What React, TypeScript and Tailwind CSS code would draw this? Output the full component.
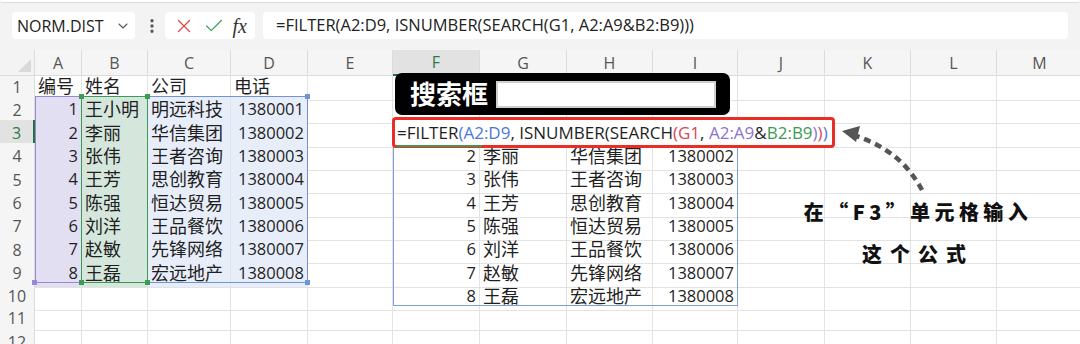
import { ChevronDown, EllipsisVertical, X, Check } from "lucide-react";

const COLS = "grid-cols-[35px_47px_66px_83px_77px_85px_87px_87px_86px_85px_87px_86px_86px_86px]";
const LETTERS = ["", "A", "B", "C", "D", "E", "F", "G", "H", "I", "J", "K", "L", "M"];

const people = [
  { id: 1, name: "王小明", company: "明远科技", phone: "1380001" },
  { id: 2, name: "李丽", company: "华信集团", phone: "1380002" },
  { id: 3, name: "张伟", company: "王者咨询", phone: "1380003" },
  { id: 4, name: "王芳", company: "思创教育", phone: "1380004" },
  { id: 5, name: "陈强", company: "恒达贸易", phone: "1380005" },
  { id: 6, name: "刘洋", company: "王品餐饮", phone: "1380006" },
  { id: 7, name: "赵敏", company: "先锋网络", phone: "1380007" },
  { id: 8, name: "王磊", company: "宏远地产", phone: "1380008" },
];

const cjk = /[\u4e00-\u9fff]/;

type CellProps = { text?: string | number; right?: boolean; bg?: string };

function Cell({ text, right, bg }: CellProps) {
  const s = text === undefined ? "" : String(text);
  return (
    <div
      className={`flex items-center overflow-visible whitespace-nowrap border-r border-b border-[#e3e3e3] px-[3px] text-[#1f1f1f] ${
        right ? "justify-end" : "justify-start"
      } ${cjk.test(s) ? "text-[18px]" : "text-[16.5px]"} ${bg ?? ""}`}
    >
      {s}
    </div>
  );
}

// cells for one sheet row, keyed by column letter
function rowCells(r: number): Record<string, CellProps> {
  const out: Record<string, CellProps> = {};
  if (r === 1) {
    out.A = { text: "编号" };
    out.B = { text: "姓名" };
    out.C = { text: "公司" };
    out.D = { text: "电话" };
  } else if (r >= 2 && r <= 9) {
    const p = people[r - 2];
    out.A = { text: p.id, right: true, bg: "bg-[#e3dff3]" };
    out.B = { text: p.name, bg: "bg-[#d5e7dd]" };
    out.C = { text: p.company, bg: "bg-[#e8eef9]" };
    out.D = { text: p.phone, right: true, bg: "bg-[#e8eef9]" };
  }
  // row 3 of the spill sits under the formula overlay, so it's left out
  if (r >= 4 && r <= 10) {
    const p = people[r - 3];
    out.F = { text: p.id, right: true };
    out.G = { text: p.name };
    out.H = { text: p.company };
    out.I = { text: p.phone, right: true };
  }
  return out;
}

function Toolbar() {
  return (
    <div className="h-[50px] bg-[#f3f3f3]">
      <div className="h-[3px] rounded-b-md border-b border-[#dedede] bg-white" />
      <div className="flex items-center pt-[9px] pl-[12px] pr-[12px]">
        <div className="flex h-[27px] w-[123px] items-center justify-between rounded-[4px] bg-white pl-[5px] pr-[4px]">
          <span className="text-[16px] text-[#222]">NORM.DIST</span>
          <ChevronDown size={16} strokeWidth={1.6} className="text-[#555]" />
        </div>
        <EllipsisVertical size={18} strokeWidth={2.4} className="ml-[8px] text-[#555]" />
        <div className="ml-[4px] flex h-[27px] w-[90px] items-center justify-between rounded-[4px] bg-white px-[8px]">
          <X size={22} strokeWidth={1.4} className="text-[#e0484a]" />
          <Check size={22} strokeWidth={1.4} className="text-[#3aa45c]" />
          <span className="font-['Liberation_Serif',serif] text-[20px] italic text-[#333]">fx</span>
        </div>
        <div className="ml-[8px] flex h-[27px] flex-1 items-center rounded-[4px] bg-white pl-[13px] text-[16.5px] text-[#222]">
          =FILTER(A2:D9, ISNUMBER(SEARCH(G1, A2:A9&amp;B2:B9)))
        </div>
      </div>
    </div>
  );
}

function HeaderRow() {
  return (
    <div className={`grid h-[23px] ${COLS}`}>
      {LETTERS.map((l, i) =>
        i === 0 ? (
          <div key={i} className="relative border-r border-b border-[#dcdcdc] bg-[#f3f3f3]">
            <svg className="absolute right-[3px] bottom-[3px]" width="13" height="13" viewBox="0 0 13 13">
              <path d="M13 0 L13 13 L0 13 Z" fill="#d9d9d9" />
            </svg>
          </div>
        ) : l === "F" ? (
          <div key={i} className="flex items-center justify-center border-r border-b-2 border-r-[#dcdcdc] border-b-[#217346] bg-[#e2e2e2] text-[16px] text-[#2b7a4b]">
            {l}
          </div>
        ) : (
          <div key={i} className="flex items-center justify-center border-r border-b border-[#dcdcdc] bg-[#f5f5f5] text-[16px] text-[#555]">
            {l}
          </div>
        )
      )}
    </div>
  );
}

function Rows() {
  return (
    <>
      {Array.from({ length: 12 }, (_, k) => k + 1).map((r) => {
        const cells = rowCells(r);
        return (
          <div key={r} className={`grid h-[23.33px] ${COLS}`}>
            <div
              className={`flex items-center justify-center border-b text-[16px] ${
                r === 3
                  ? "border-r-2 border-r-[#217346] border-b-[#dcdcdc] bg-[#e2e2e2] text-[#2b7a4b]"
                  : "border-r border-[#dcdcdc] bg-[#f5f5f5] text-[#555]"
              }`}
            >
              {r}
            </div>
            {LETTERS.slice(1).map((l) => (
              <Cell key={l} {...(cells[l] ?? {})} />
            ))}
          </div>
        );
      })}
    </>
  );
}

function Handle({ className }: { className: string }) {
  return <div className={`absolute h-[5px] w-[5px] ${className}`} />;
}

function Arrow() {
  return (
    <svg className="pointer-events-none absolute left-[832px] top-[120px]" width="110" height="80" viewBox="0 0 110 80">
      <path
        d="M90 70 C 78 48, 60 28, 24 16"
        fill="none"
        stroke="#555"
        strokeWidth="4.5"
        strokeDasharray="7 5"
      />
      <path d="M10 11 L 28 6 L 24 22 Z" fill="#555" />
    </svg>
  );
}

export default function App() {
  return (
    <div className="relative h-[344px] w-[1080px] overflow-hidden bg-white font-['Open_Sans','Noto_Sans_CJK_SC',sans-serif]">
      <Toolbar />
      <div className="relative">
        <HeaderRow />
        <Rows />

        {/* formula range highlights */}
        <div className="pointer-events-none absolute left-[35px] top-[46.3px] h-[186.7px] w-[273px] border-[1.5px] border-[#6f95d8]" />
        <div className="pointer-events-none absolute left-[35px] top-[46.3px] h-[186.7px] w-[47px] border-[1.5px] border-[#9b87d2]" />
        <div className="pointer-events-none absolute left-[81px] top-[46.3px] h-[186.7px] w-[67px] border-[1.5px] border-[#3c9a55]">
          <Handle className="-left-[3px] -top-[3px] bg-[#3c9a55]" />
          <Handle className="-right-[3px] -top-[3px] bg-[#3c9a55]" />
          <Handle className="-left-[3px] -bottom-[3px] bg-[#3c9a55]" />
          <Handle className="-right-[3px] -bottom-[3px] bg-[#3c9a55]" />
        </div>
        <Handle className="left-[305px] top-[44px] bg-[#6f95d8]" />
        <Handle className="left-[305px] top-[230px] bg-[#6f95d8]" />
        <Handle className="left-[32px] top-[230px] bg-[#9b87d2]" />

        {/* spill range */}
        <div className="pointer-events-none absolute left-[393px] top-[69.7px] h-[186.7px] w-[345px] border border-[#7d9de0]" />
      </div>

      {/* search box */}
      <div className="absolute left-[395px] top-[73px] flex h-[42px] w-[335px] items-center rounded-[7px] bg-black pl-[15px]">
        <span className="text-[26px] font-bold leading-none text-white">搜索框</span>
        <div className="ml-[8px] h-[27px] w-[220px] border-2 border-[#cfcfcf] bg-white" />
      </div>

      {/* formula shown in F3 */}
      <div className="absolute left-[392px] top-[117px] flex h-[31px] w-[443px] items-center whitespace-pre rounded-[4px] border-[3px] border-[#ea2e26] bg-white pl-[2px] text-[17px] text-[#1f1f1f]">
        <span>=FILTER</span>
        <span className="text-[#4a78d6]">(A2:D9</span>
        <span>{", ISNUMBER(SEARCH"}</span>
        <span className="text-[#d9465a]">(G1</span>
        <span>{", "}</span>
        <span className="text-[#8c72cf]">A2:A9</span>
        <span>&amp;</span>
        <span className="text-[#3c9a55]">B2:B9</span>
        <span className="text-[#8c72cf]">)</span>
        <span className="text-[#d9465a]">)</span>
        <span className="text-[#4a78d6]">)</span>
        <div className="absolute left-[1px] bottom-[-2px] h-[2px] w-[86px] bg-[#3c9a55]" />
      </div>

      <Arrow />

      {/* note */}
      <div className="absolute left-[796px] top-[198px] flex w-[244px] flex-col items-center gap-[14px] font-['Noto_Sans_CJK_SC',sans-serif] font-black text-[#111]">
        <span className="text-[20px] leading-[28px] tracking-[0.22em]">在“F3”单元格输入</span>
        <span className="text-[20px] leading-[28px] tracking-[0.4em]">这个公式</span>
      </div>
    </div>
  );
}
